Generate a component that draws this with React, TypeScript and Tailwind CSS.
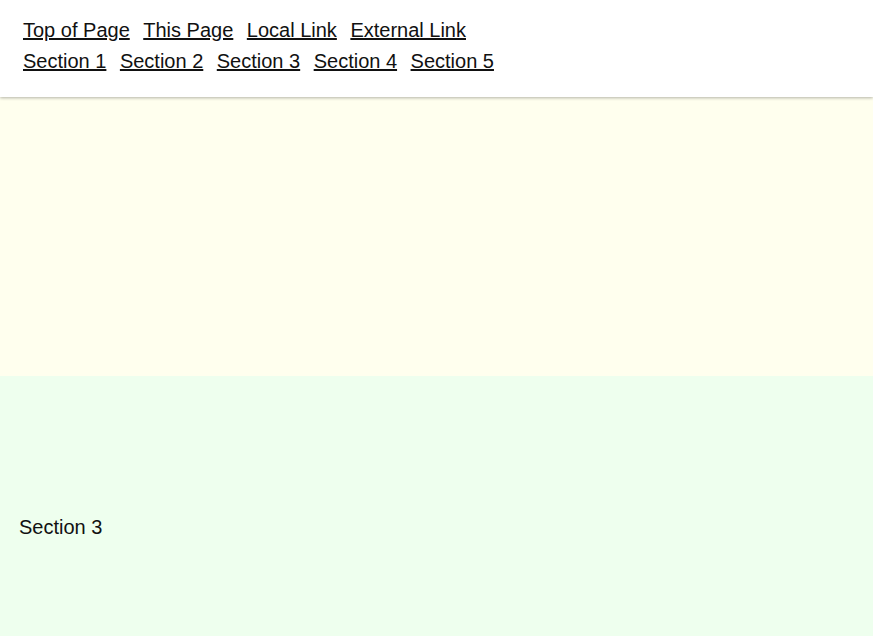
import React from "react";

export default function App() {
  const row1 = ["Top of Page", "This Page", "Local Link", "External Link"];
  const row2 = ["Section 1", "Section 2", "Section 3", "Section 4", "Section 5"];
  return (
    <div
      className="w-full h-[636px] overflow-hidden flex flex-col text-[20px] text-[#111]"
      style={{ fontFamily: '"Liberation Sans", Arial, sans-serif' }}
    >
      <header className="relative z-10 h-[97px] shrink-0 bg-white shadow-[0_1px_3px_rgba(0,0,0,0.3)] pl-[23px] pt-[19px] flex flex-col gap-[8px] leading-[23px]">
        <div className="flex gap-x-[13.5px]">
          {row1.map((t) => (
            <a key={t} href="#" className="underline text-[#111]">
              {t}
            </a>
          ))}
        </div>
        <div className="flex gap-x-[13.5px]">
          {row2.map((t) => (
            <a key={t} href="#" className="underline text-[#111]">
              {t}
            </a>
          ))}
        </div>
      </header>
      <section className="h-[279px] shrink-0 bg-[#ffffee]" />
      <section className="flex-1 bg-[#eeffee] pl-[19px] pt-[140px] leading-[23px]">
        Section 3
      </section>
    </div>
  );
}
